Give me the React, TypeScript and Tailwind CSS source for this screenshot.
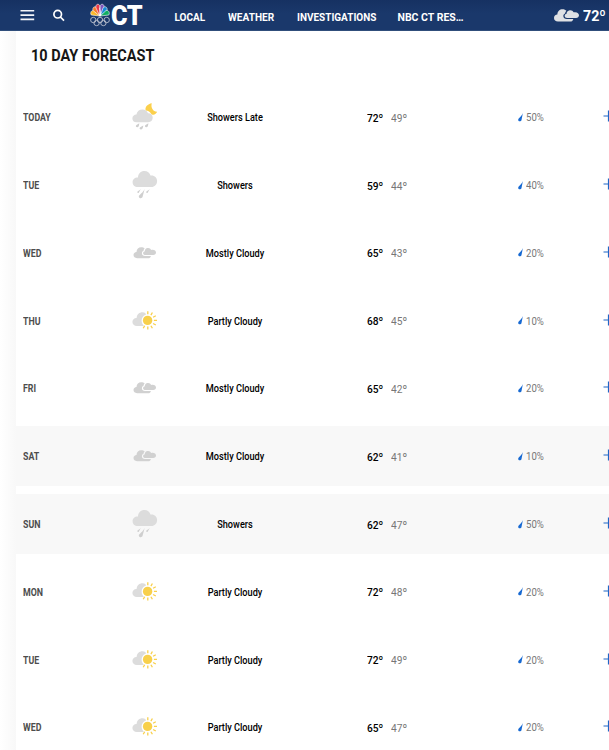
import React from 'react';

type Kind = 'late' | 'showers' | 'mostly' | 'partly';

const days: { day: string; kind: Kind; text: string; hi: number; lo: number; rain: number }[] = [
  { day: 'TODAY', kind: 'late', text: 'Showers Late', hi: 72, lo: 49, rain: 50 },
  { day: 'TUE', kind: 'showers', text: 'Showers', hi: 59, lo: 44, rain: 40 },
  { day: 'WED', kind: 'mostly', text: 'Mostly Cloudy', hi: 65, lo: 43, rain: 20 },
  { day: 'THU', kind: 'partly', text: 'Partly Cloudy', hi: 68, lo: 45, rain: 10 },
  { day: 'FRI', kind: 'mostly', text: 'Mostly Cloudy', hi: 65, lo: 42, rain: 20 },
  { day: 'SAT', kind: 'mostly', text: 'Mostly Cloudy', hi: 62, lo: 41, rain: 10 },
  { day: 'SUN', kind: 'showers', text: 'Showers', hi: 62, lo: 47, rain: 50 },
  { day: 'MON', kind: 'partly', text: 'Partly Cloudy', hi: 72, lo: 48, rain: 20 },
  { day: 'TUE', kind: 'partly', text: 'Partly Cloudy', hi: 72, lo: 49, rain: 20 },
  { day: 'WED', kind: 'partly', text: 'Partly Cloudy', hi: 65, lo: 47, rain: 20 },
];

// Two overlapping clouds, 23 x 11.5 units
function Clouds({ fill }: { fill: string }) {
  return (
    <g fill={fill}>
      <path d="M3.6 11.2C1.4 11.2 0 9.9 0 8.1C0 6.3 1.3 5.1 3 5C3.1 2 5.1 .2 7.7 .2C9.2 .2 10.4 .7 11.2 1.6C10.5 2.2 10.1 3 9.9 4C8.9 4.4 8.4 5.2 8.4 6.2C8.4 7.9 9.7 8.9 11.5 8.9H17.4C17.1 10.4 16.1 11.2 14.6 11.2Z" />
      <path d="M12 8C10.5 8 9.6 7.3 9.6 6.2C9.6 5.2 10.3 4.6 11.2 4.6C11.2 2.7 12.4 1.3 14.2 1.1C15.8 .9 17.1 1.7 17.6 3C20.6 2.3 22.5 3.8 22.5 5.6C22.5 7 21.4 8 19.8 8Z" />
    </g>
  );
}

function WeatherIcon({ kind }: { kind: Kind }) {
  return (
    <svg className="block size-8" viewBox="0 0 32 32">
      {kind === 'late' && (
        <>
          <path fill="#fbd04c" d="M22.8 2.3C18.7 3 15.6 6 16.7 9.4C19 9.4 21.4 11 22.5 13.2C23.8 14 25.4 13.9 25.9 13.3C26.9 12.3 27.8 11.8 28.1 10.7C24.2 10.8 21.5 6.7 22.8 2.3Z" />
          <path fill="#dcdcdc" d="M7.3 21.2C4.9 21.2 3.4 19.6 3.4 17.5C3.4 15.2 5.1 13.7 7.4 13.6C7.9 10.5 10.4 8.6 13.4 8.6C16.2 8.6 18.2 10.2 19 12.2C21.7 11.9 23.7 13.9 23.7 16.5C23.7 19.3 21.8 21.2 19.3 21.2Z" />
          <g fill="#cecece">
            <path d="M10.3 22.2C10 24.7 9.7 26.3 8.2 26.3C7 26.3 6.4 25.2 7.2 24.3C8 23.4 9.3 23.1 10.3 22.2Z" />
            <path d="M19.4 22.2C19.1 24.7 18.8 26.3 17.3 26.3C16.1 26.3 15.5 25.2 16.3 24.3C17.1 23.4 18.4 23.1 19.4 22.2Z" />
            <path d="M14.3 24.4C14 26.9 13.3 28.5 12 28.5C10.8 28.5 10.1 27.4 10.9 26.5C11.7 25.6 13.3 25.3 14.3 24.4Z" />
          </g>
        </>
      )}
      {kind === 'showers' && (
        <>
          <path fill="#dcdcdc" d="M8.8 18C5.6 18 3.6 15.9 3.6 13.2C3.6 10.2 6 8.2 9 8.4C9.2 4.7 11.8 2 15.3 2C18.5 2 20.8 4 21.5 6.5C25.1 5.9 28.1 8.4 28.1 12C28.1 15.6 25.6 18 22.4 18Z" />
          <g fill="#cfcfcf">
            <path d="M11.8 20L9.9 23.4C9.5 24.3 8.1 24 8.2 23.1C8.2 22.2 10.7 21.5 11.8 20Z" />
            <path d="M15.7 19.7L13.5 28.1C13 29.8 9.8 29.6 9.8 27.5C9.8 25.7 14 24 15.7 19.7Z" />
            <path d="M20.7 20L18.8 23.4C18.4 24.3 17 24 17.1 23.1C17.1 22.2 19.6 21.5 20.7 20Z" />
          </g>
        </>
      )}
      {kind === 'mostly' && (
        <g transform="translate(4.5 10)">
          <Clouds fill="#d1d1d1" />
        </g>
      )}
      {kind === 'partly' && (
        <g transform="translate(0 -.5)">
          <path fill="#dcdcdc" d="M7.9 21.4C5.2 21.4 3.4 19.6 3.4 17.4C3.4 15 5.2 13.3 7.6 13.4C7.9 9.8 10.4 7.7 13.4 7.7C14.6 7.7 15.6 8.1 16.3 8.6L17 10C14.2 11 12.5 13.4 12.6 16.2C12.6 18.1 13.5 20.1 15 21.4Z" />
          <circle cx="18.6" cy="15.9" r="4.7" fill="#f8d04b" />
          <path
            stroke="#f8d04b"
            strokeWidth="1.3"
            d="M24.9 15.9H28M24.1 19L26.8 20.5M21.9 21.2L23.4 23.8M18.8 22V25.1M24.1 12.8L26.8 11.3M21.9 10.6L23.4 8M18.8 9.8V6.7M15.7 21.2L14.2 23.8"
          />
        </g>
      )}
    </svg>
  );
}

function Peacock() {
  return (
    <svg className="block h-6 w-5 shrink-0" viewBox="0 0 20 24">
      <g stroke="#fff" strokeWidth=".6">
        <path fill="#fbb829" d="M9.8 13L1.2 12C-.2 9.3 1.8 6.8 4 7.5Z" />
        <path fill="#f47b2a" d="M9.8 13L3 7.5C2.1 4.2 4.9 2.8 6.8 4.5Z" />
        <path fill="#e83849" d="M9.8 13L6 5C5.2 1.2 8.3 .2 9.8 2.5Z" />
        <path fill="#8055bd" d="M10.2 13L10.2 2.5C11.7 .2 14.8 1.2 14 5Z" />
        <path fill="#1689d5" d="M10.2 13L13.2 4.5C15.1 2.8 17.9 4.2 17 7.5Z" />
        <path fill="#10ae62" d="M10.2 13L16 7.5C18.2 6.8 20.2 9.3 18.8 12Z" />
      </g>
      <path fill="#fff" d="M9.5 4.5L8.8 5.3L9.5 5.6L9.9 10L8.8 13H11.2L10.3 7Z" />
      <g fill="none" stroke="#b8bdcc" strokeWidth=".9">
        <circle cx="3.3" cy="17" r="2.7" />
        <circle cx="10" cy="17" r="2.7" />
        <circle cx="16.7" cy="17" r="2.7" />
        <circle cx="6.6" cy="20" r="2.7" />
        <circle cx="13.4" cy="20" r="2.7" />
      </g>
    </svg>
  );
}

function Header() {
  return (
    <header className="flex h-[31px] shrink-0 items-start border-b border-[#304e7b] bg-linear-to-b from-[#163162] to-[#1a386b] to-45% text-white">
      <svg className="ml-5 mt-2 block h-4 w-[15px]" viewBox="0 0 15 16">
        <path d="M.5 2.8H14.2M.5 7.1H14.2M.5 11.4H14.2" stroke="#f3f5fa" strokeWidth="1.6" />
      </svg>
      <svg className="ml-[17px] mt-[9px] block size-[13px]" viewBox="0 0 13 13" fill="none" stroke="#fff" strokeWidth="1.7">
        <circle cx="5.7" cy="5.2" r="3.8" />
        <path d="M8.4 8L12 11.6" />
      </svg>
      <div className="ml-[25px] mt-[3px] flex w-[84px]">
        <Peacock />
        <span className="ml-px mt-px origin-left scale-x-[.9] text-[28px] font-black leading-6 tracking-[-0.5px]">CT</span>
      </div>
      <nav className="mt-2.5 flex h-4 items-center whitespace-nowrap text-[10.5px] font-bold leading-4">
        <span className="w-[54px] origin-left scale-x-[.95] pl-[.5px]">LOCAL</span>
        <span className="w-[68.5px] origin-left scale-x-[.96]">WEATHER</span>
        <span className="w-[101px] origin-left scale-x-[.95]">INVESTIGATIONS</span>
        <span className="w-[156.5px]">NBC CT RES…</span>
      </nav>
      <svg className="mt-[9px] block h-[13px] w-[25px]" viewBox="0 0 22.5 11.7">
        <Clouds fill="#dfe1e4" />
      </svg>
      <span className="ml-[3.5px] mt-[6px] origin-left scale-x-[.92] text-[15.5px] font-bold leading-5">72º</span>
    </header>
  );
}

export default function App() {
  return (
    <div className="flex h-[750px] w-[609px] flex-col overflow-hidden bg-white font-['Roboto','Liberation_Sans',sans-serif]">
      <Header />
      <div className="flex min-h-0 flex-1">
        <div className="w-4 shrink-0 bg-linear-to-r from-white to-[#f8f8f8]" />
        <main className="min-w-0 flex-1">
          <h1 className="ml-[14.5px] h-14 origin-left scale-x-[.925] pt-[14.5px] text-[15.7px] font-bold leading-5 text-[#171717]">10 DAY FORECAST</h1>
          <div className="flex flex-col gap-[7.3px]">
            {days.map((d, i) => (
              <section key={i} className={`flex h-[60.5px] shrink-0 items-center overflow-hidden whitespace-nowrap leading-4 ${i === 5 || i === 6 ? 'bg-[#f8f8f8]' : 'bg-white'}`}>
                <span className="ml-[7px] w-[99px] shrink-0 origin-left scale-x-[.88] pt-[2px] text-[10px] font-bold text-[#4d4d4d]">{d.day}</span>
                <span className="w-[45px] shrink-0 pl-[7px]"><WeatherIcon kind={d.kind} /></span>
                <span className="w-[136px] shrink-0 scale-x-[.9] pt-[2px] text-center text-[10.2px] font-medium text-black">{d.text}</span>
                <span className="ml-16 w-6 shrink-0 origin-left scale-x-[.87] pt-px text-[11.7px] font-medium text-black">{d.hi}º</span>
                <span className="w-[126px] shrink-0 origin-left scale-x-[.87] pt-px text-[11.7px] text-[#777]">{d.lo}º</span>
                <span className="flex w-[86px] shrink-0 items-center text-[#777]">
                  <svg className="ml-px mr-[2.5px] block h-[9px] w-[5px]" viewBox="0 0 5 9"><path fill="#1769d2" d="M4.9 0L3.5 6.9C3 9 .1 8.6 .2 6.7C.3 5.2 3.2 4.1 4.9 0Z" /></svg>
                  <span className="origin-left scale-x-[.96] pt-[2px] text-[10px]">{d.rain}%</span>
                </span>
                <svg className="mb-[2px] block size-3 shrink-0" viewBox="0 0 12 12"><path d="M.5 6H11.5M5.5 .5V11.5" stroke="#1f66c7" strokeWidth="1.2" /></svg>
              </section>
            ))}
          </div>
        </main>
      </div>
    </div>
  );
}
